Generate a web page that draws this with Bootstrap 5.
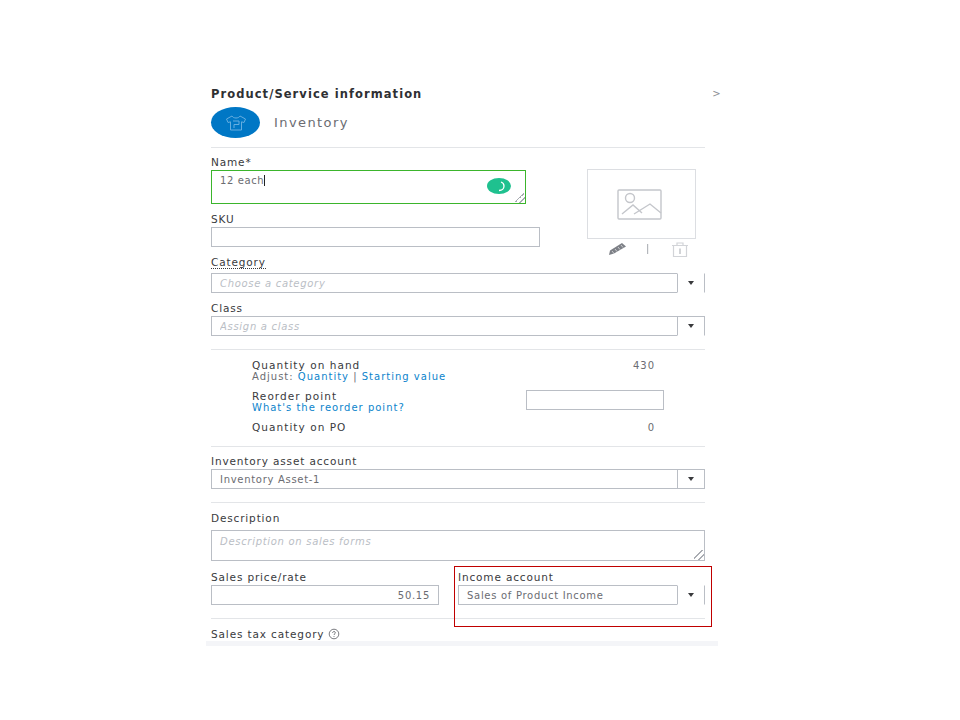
<!DOCTYPE html>
<html lang="en">
<head>
<meta charset="utf-8">
<title>Product/Service information</title>
<link rel="stylesheet" href="https://cdn.jsdelivr.net/npm/bootstrap@5.3.0/dist/css/bootstrap.min.css">
<style>
html,body{background:#fff;}
body{font-family:"DejaVu Sans","Liberation Sans",sans-serif;color:#393a3d;font-size:10px;letter-spacing:.35px;}
.sheet{width:494px;margin-left:211px;padding-top:86px;}
.ttl{font-size:11.5px;line-height:16px;margin:0;font-weight:700;letter-spacing:1.06px;color:#2f3033;}
.chev{right:-16px;top:1px;line-height:14px;font-size:10px;color:#8d9096;}
.oval{width:49px;height:31px;border-radius:50%;background:#0077c5;}
.kind{font-size:13px;letter-spacing:1.42px;color:#6b6c72;margin-left:14px;}
.rule{margin:0;border:0;height:1px;background:#e3e5e8;opacity:1;}
.lbl{display:block;font-size:10.5px;line-height:16px;margin:0;letter-spacing:.85px;color:#393a3d;}
.sheet .form-control{border-radius:0;border:1px solid #babec5;font-size:10px;letter-spacing:.7px;padding:0 8px;color:#6b6c72;box-shadow:none;min-height:0;}
.sheet .form-control::placeholder{color:#babec5;font-style:italic;}
.sheet .form-control::-webkit-resizer{background:linear-gradient(135deg,transparent 40%,#a9acb2 40%,#a9acb2 50%,transparent 50%,transparent 68%,#a9acb2 68%,#a9acb2 78%,transparent 78%) no-repeat right bottom/10px 10px;}
.h20{height:20px;}
.namebox{width:315px;height:34px;overflow:auto;resize:both;line-height:20px;}
.sheet .namebox{border:1px solid #3bb52c;letter-spacing:.6px;}
.caret-bar{display:inline-block;width:1px;height:11px;background:#222;vertical-align:-2px;}
.spin{right:15px;top:8px;}
.w329{width:329px;}
.row-top{height:99px;}
.photo{width:109px;margin-left:47px;}
.frame{height:70px;border:1px solid #dcdee2;margin-top:21px;}
.pic-ico{margin-right:4px;}
.tools{height:20px;padding:0 7px 0 21px;}
.sep-ico{margin-right:3px;}
.mt7{margin-top:7px;}
.mt6{margin-top:6px;}
.dotted{display:inline-block;line-height:12px;border-bottom:1px dotted #393a3d;margin-top:2px;margin-bottom:4px;}
.arrow{width:28px;height:20px;border:1px solid #babec5;background:#fff;flex:none;border-radius:0;padding:0;display:flex;align-items:center;justify-content:center;margin-left:-1px;}
.open-edge{border-top-color:transparent;border-bottom-color:transparent;}
.tri{width:0;height:0;border-left:3.5px solid transparent;border-right:3.5px solid transparent;border-top:4px solid #393a3d;}
.r13{margin-top:13px;}
.stock{padding:10px 50px 0 41px;font-size:10px;line-height:11px;letter-spacing:1px;}
.stock a{color:#0c84cc;text-decoration:none;}
.mute{color:#6b6c72;}
.stock .hd{color:#393a3d;font-size:10.5px;letter-spacing:1.05px;}
.reorder{margin-top:9px;margin-right:-9px;}
.qinput{width:138px;margin-top:-1px;}
.po{margin-top:9px;margin-bottom:13px;}
.descbox{height:31px;resize:vertical;margin-top:4px;padding-top:3px !important;}
.pricebox{width:228px;}
.price-in{text-align:right;}
.incomecol{margin-left:19px;flex:1;min-width:0;}
.redbox{left:-4px;top:-3px;width:258px;height:61px;border:1px solid #c00000;pointer-events:none;}
.tax{font-size:10.5px;line-height:14px;margin-top:8px;letter-spacing:.87px;height:14px;}
.fade-bar{height:5px;background:#f4f5f8;margin:0 -13px 0 -5px;}
</style>
</head>
<body>
<div class="sheet">
  <div class="position-relative">
    <h1 class="ttl">Product/Service information</h1>
    <span class="chev position-absolute">&gt;</span>
  </div>
  <div class="d-flex align-items-center mt-1" style="padding-top:1px">
    <div class="oval d-flex align-items-center justify-content-center">
      <svg width="22" height="16" viewBox="0 0 22 16" fill="none" stroke="#66aee0" stroke-width="1"><path d="M7 1 1.500 4 3 7.500l2.500-.7V15h11V6.800l2.500.7L20.500 4 15 1c-.8 1.400-2.300 2-4 2S7.800 2.400 7 1Z"/><path d="M8 6h6v3.500H9V13"/></svg>
    </div>
    <span class="kind">Inventory</span>
  </div>
  <hr class="rule" style="margin-top:9px">

  <div class="d-flex row-top">
    <div>
      <label class="lbl mt6">Name*</label>
      <div class="position-relative" style="width:315px">
        <div class="form-control namebox">12 each<span class="caret-bar"></span></div>
        <svg class="spin position-absolute" width="24" height="16" viewBox="0 0 24 16"><ellipse cx="12" cy="8" rx="12" ry="8" fill="#1fc18f"/><path d="M12 12.500c3 0 5-2 5-4.500s-1.500-3.500-3-4" fill="none" stroke="#fff" stroke-width="1.300"/></svg>
      </div>
      <label class="lbl mt7">SKU</label>
      <input class="form-control h20 w329" type="text" aria-label="SKU">
    </div>
    <div class="photo">
      <div class="frame d-flex align-items-center justify-content-center">
        <svg class="pic-ico" width="46" height="31" viewBox="0 0 46 31" fill="none" stroke="#c4c6cb" stroke-width="1.400"><rect x="1" y="1" width="43" height="29" rx="1"/><circle cx="13" cy="9" r="4.500"/><path d="M5 25 16 16l9 8M17 25l16-10 11 9"/></svg>
      </div>
      <div class="tools d-flex align-items-center justify-content-between">
        <svg width="19" height="14" viewBox="0 0 19 14"><path d="M1 13l1-4.500L14 1l4 3.500L6 11.500Z" fill="#7d8087"/><path d="M4 9l2 2.500M7 7l2 2.500M10 5l2 2.500M13 3l2 2.500" stroke="#fff" stroke-width=".6"/></svg>
        <svg class="sep-ico" width="3" height="10" viewBox="0 0 3 10"><rect x="1" width="1.200" height="10" fill="#b4b7bc"/></svg>
        <svg width="18" height="15" viewBox="0 0 18 15" fill="none" stroke="#d2d4d8" stroke-width="1.200"><path d="M1 3.500h16M6 3.500V1h6v2.500M2.500 3.500v11h13v-11"/><path d="M9 6.500v5.500" stroke="#b4b7bc"/></svg>
      </div>
    </div>
  </div>

  <div style="margin-top:7px"><label class="lbl dotted">Category</label></div>
  <div class="d-flex">
    <input class="form-control h20 flex-grow-1" type="text" placeholder="Choose a category" aria-label="Category">
    <div class="arrow open-edge"><span class="tri"></span></div>
  </div>
  <label class="lbl mt7">Class</label>
  <div class="d-flex">
    <input class="form-control h20 flex-grow-1" type="text" placeholder="Assign a class" aria-label="Class">
    <div class="arrow" style="border-bottom-color:transparent"><span class="tri"></span></div>
  </div>
  <hr class="rule r13">

  <div class="stock">
    <div class="d-flex justify-content-between"><span class="hd">Quantity on hand</span><span class="mute">430</span></div>
    <div class="mute">Adjust: <a href="#">Quantity</a> | <a href="#">Starting value</a></div>
    <div class="d-flex justify-content-between align-items-start reorder">
      <div><div class="hd">Reorder point</div><a href="#">What's the reorder point?</a></div>
      <input class="form-control h20 qinput" type="text" aria-label="Reorder point">
    </div>
    <div class="d-flex justify-content-between po"><span class="hd">Quantity on PO</span><span class="mute">0</span></div>
  </div>
  <hr class="rule">

  <label class="lbl mt6">Inventory asset account</label>
  <div class="d-flex">
    <input class="form-control h20 flex-grow-1" type="text" value="Inventory Asset-1" aria-label="Inventory asset account">
    <div class="arrow"><span class="tri"></span></div>
  </div>
  <hr class="rule r13">

  <label class="lbl mt7">Description</label>
  <textarea class="form-control descbox d-block" placeholder="Description on sales forms" aria-label="Description"></textarea>

  <div class="d-flex" style="margin-top:8px">
    <div class="pricebox">
      <label class="lbl">Sales price/rate</label>
      <input class="form-control h20 price-in" type="text" value="50.15" aria-label="Sales price/rate">
    </div>
    <div class="incomecol position-relative">
      <label class="lbl">Income account</label>
      <div class="d-flex">
        <input class="form-control h20 flex-grow-1" type="text" value="Sales of Product Income" aria-label="Income account">
        <div class="arrow open-edge"><span class="tri"></span></div>
      </div>
      <div class="redbox position-absolute"></div>
    </div>
  </div>
  <hr class="rule r13">
  <div class="tax d-flex align-items-center">Sales tax category
    <svg class="ms-1" width="12" height="12" viewBox="0 0 12 12" fill="none" stroke="#6b6c72" stroke-width=".9"><circle cx="6" cy="6" r="4.800"/><path d="M4.600 5c0-1 .7-1.500 1.400-1.500S7.400 4 7.400 4.800 6 5.800 6 7M6 8v.9"/></svg>
  </div>
  <div class="fade-bar"></div>
</div>
<script src="https://cdn.jsdelivr.net/npm/bootstrap@5.3.0/dist/js/bootstrap.bundle.min.js"></script>
</body>
</html>
